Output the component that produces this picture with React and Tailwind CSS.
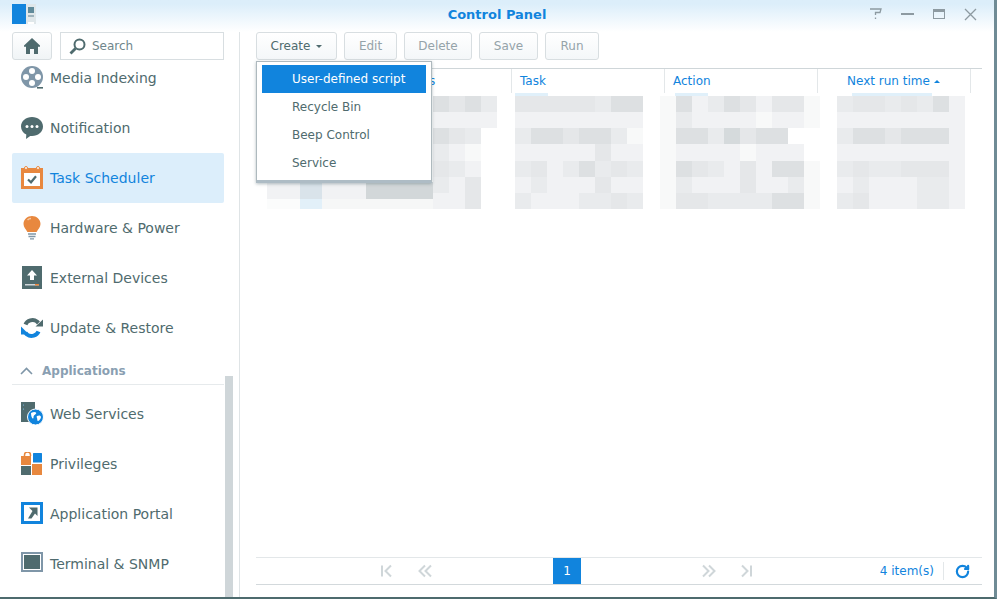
import { RotateCw } from 'lucide-react'

const shades = {
  X: 'bg-[#d5dadc]',
  D: 'bg-[#dde0e2]',
  M: 'bg-[#e5e7e9]',
  B: 'bg-[#e9ebed]',
  L: 'bg-[#f1f2f4]',
  W: 'bg-[#f8f9f9]',
  '.': 'bg-white',
}

// blurred table cells, one letter per 16px block
const statusCol = ['DMDB', 'LLLL', 'DMB.', 'BLW.', 'MBL.', 'BLM.', 'LLM.']
const taskCol = ['MMMMMBDD', 'LLLLLLLL', 'BDDMDDBW', 'LLLLLMLL', 'BMLBDBMB', 'LBLLLMLL', 'BLLLBBMB']
const actionCol = ['WDLBDMLMMW', 'WBLLLLWLLW', 'WDDBXMDD..', 'WLLLLWLLL.', 'WDMBLMLDDW', 'WBLLLMLLBW', 'WMMBBBBDDW']
const timeCol = ['BMMBMBDL', 'LLLLLLLL', 'BDDMDDDL', 'LLLLLLLL', 'BMBBMMML', 'LBLLLBBL', 'BMLLLBBL']

function Mosaic({ rows }) {
  return (
    <div className="flex flex-col h-[113px]">
      {rows.map((row, i) => (
        <div key={i} className="flex flex-1">
          {row.split('').map((c, j) => (
            <div key={j} className={`w-[16px] ${shades[c]}`} />
          ))}
        </div>
      ))}
    </div>
  )
}

function MediaIcon() {
  return (
    <svg width="24" height="24" viewBox="0 0 24 24">
      <circle cx="11" cy="11" r="11" fill="#7f96a8" />
      <circle cx="11" cy="5" r="3" fill="#fff" />
      <circle cx="11" cy="17" r="3" fill="#fff" />
      <circle cx="5" cy="11" r="3" fill="#fff" />
      <circle cx="17" cy="11" r="3" fill="#fff" />
      <path d="M16 21h6v1.6h-6z" fill="#4f6b6e" />
    </svg>
  )
}

function BubbleIcon() {
  return (
    <svg width="24" height="24" viewBox="0 0 24 24">
      <path d="M11 1c6 0 11 4 11 9.500S17 20 11 20c-.6 0-1.200 0-1.800-.1L5 23l.3-4.400C2.100 17 0 14 0 10.500 0 5 5 1 11 1z" fill="#4f6b6e" />
      <circle cx="6" cy="10.500" r="1.500" fill="#fff" />
      <circle cx="11" cy="10.500" r="1.500" fill="#fff" />
      <circle cx="16" cy="10.500" r="1.500" fill="#fff" />
    </svg>
  )
}

function TaskIcon() {
  return (
    <svg width="24" height="24" viewBox="0 0 24 24">
      <rect x="0" y="2" width="22" height="21" fill="#e8883f" />
      <rect x="3" y="7" width="16" height="13" fill="#fff" />
      <circle cx="5" cy="2" r="1.500" fill="#fff" stroke="#e8883f" />
      <circle cx="17" cy="2" r="1.500" fill="#fff" stroke="#e8883f" />
      <path d="M7 13.500l3 2.800 5-6" fill="none" stroke="#4f6b6e" strokeWidth="2.200" />
    </svg>
  )
}

function BulbIcon() {
  return (
    <svg width="24" height="24" viewBox="0 0 24 24">
      <path d="M11 0c4.500 0 8.500 3.400 8.500 8 0 3.400-2.500 5.300-3.900 8H6.400C5 13.300 2.500 11.400 2.500 8 2.500 3.400 6.500 0 11 0z" fill="#e8883f" />
      <path d="M6.500 4c1-1 2.200-1.500 3.500-1.500" stroke="#f6c8a0" strokeWidth="1.500" fill="none" />
      <path d="M7 18h8M7.500 20.500h7M9 22.800h4" stroke="#7f96a8" strokeWidth="1.300" />
    </svg>
  )
}

function ExternalIcon() {
  return (
    <svg width="24" height="24" viewBox="0 0 24 24">
      <rect x="1" y="0" width="20" height="23" fill="#4f6b6e" />
      <path d="M11 4l5 5.500h-3V14H9V9.500H6z" fill="#fff" />
      <rect x="4" y="18" width="14" height="1.500" fill="#cfd6d9" />
      <rect x="14" y="18" width="4" height="1.500" fill="#e8883f" />
    </svg>
  )
}

function UpdateIcon() {
  return (
    <svg width="24" height="24" viewBox="0 0 24 24">
      <path d="M4.500 8.500C6 4.500 12 2.500 16 5.500l1.500 1.500" fill="none" stroke="#4f6b6e" strokeWidth="4" />
      <path d="M15 9.500h7.500V2.500z" fill="#4f6b6e" transform="translate(-.5 1)" />
      <path d="M17.500 15.500C16 19.500 10 21.500 6 18.500L4.500 17" fill="none" stroke="#1184dd" strokeWidth="4" />
      <path d="M0 10.500v8h8z" fill="#1184dd" />
    </svg>
  )
}

function WebIcon() {
  return (
    <svg width="24" height="24" viewBox="0 0 24 24">
      <rect x="0" y="0" width="14" height="20" fill="#4f6b6e" />
      <circle cx="2.500" cy="3" r=".6" fill="#7fc0ee" />
      <circle cx="2.500" cy="7" r=".6" fill="#7fc0ee" />
      <circle cx="14.500" cy="15" r="8" fill="#1184dd" stroke="#fff" />
      <path d="M10 11c2-1 4-1.500 5-.5s-1 2-2 3 0 3-1 3-2-2-2-5.500zM16 14c2-1 4-.5 4 1s-2 4-3 4-.5-2-1-3-.5-1.500 0-2z" fill="#fff" />
    </svg>
  )
}

function PrivilegesIcon() {
  return (
    <svg width="24" height="24" viewBox="0 0 24 24">
      <path d="M3.500 4V3a3 3 0 0 1 6 0v1" fill="none" stroke="#e8883f" strokeWidth="1.500" />
      <rect x="0" y="4" width="10" height="9" fill="#e8883f" />
      <rect x="12" y="1" width="9" height="9.500" rx=".5" fill="#1184dd" />
      <rect x="0" y="14" width="10" height="9" fill="#4f6b6e" />
      <rect x="11" y="12" width="10" height="11" fill="#e8883f" />
    </svg>
  )
}

function PortalIcon() {
  return (
    <svg width="24" height="24" viewBox="0 0 24 24">
      <rect x="1.500" y="1.500" width="19" height="19" fill="#fff" stroke="#1184dd" strokeWidth="3" />
      <path d="M8 5.500h8.500V14l-2.500-2.500-3.500 5H7l4.500-7.500z" fill="#4f6b6e" />
    </svg>
  )
}

function TerminalIcon() {
  return (
    <svg width="24" height="24" viewBox="0 0 24 24">
      <rect x="0" y="0" width="22" height="20" fill="#7f96a8" />
      <rect x="2" y="2" width="18" height="16" fill="#fff" />
      <rect x="3" y="3" width="16" height="14" fill="#4f6b6e" />
    </svg>
  )
}

function HomeIcon() {
  return (
    <svg width="16" height="16" viewBox="0 0 16 16">
      <path d="M8 0L16 7.500v1.200H14V16H10V11H6V16H2V8.700H0V7.500z" fill="#4f6b6e" />
    </svg>
  )
}

function SearchIcon() {
  return (
    <svg width="17" height="17" viewBox="0 0 17 17">
      <circle cx="10.500" cy="6.500" r="5" fill="none" stroke="#4f6b6e" strokeWidth="2" />
      <path d="M6.500 10.500L1.500 15.500" stroke="#4f6b6e" strokeWidth="2.800" />
    </svg>
  )
}

function PagerIcon({ d }) {
  return (
    <svg width="14" height="14" viewBox="0 0 14 14" fill="none" stroke="#cfd6d9" strokeWidth="2">
      <path d={d} />
    </svg>
  )
}

function Item({ icon, label, active }) {
  return (
    <div className={`h-[50px] mx-[12px] w-[212px] rounded-[2px] flex items-center pl-[9px] gap-[5px] ${active ? 'bg-[#dceefb] text-[#1184dd]' : 'text-[#4f6b6e]'}`}>
      <div className="w-[24px] h-[24px] shrink-0 flex items-center">{icon}</div>
      <span className="pt-[1px]">{label}</span>
    </div>
  )
}

function ToolButton({ label, width, on, caret }) {
  return (
    <div className={`${width} h-[28px] border border-[#d8dee1] rounded-[3px] bg-gradient-to-b from-white to-[#f4f7f9] flex items-center justify-center gap-[6px] text-[12px] ${on ? 'text-[#4f6b6e]' : 'text-[#95a3a9]'}`}>
      {label}
      {caret && <div className="w-0 h-0 border-x-[3px] border-x-transparent border-t-[3px] border-t-[#4f6b6e]" />}
    </div>
  )
}

export default function App() {
  return (
    <div className="w-[997px] h-[599px] overflow-hidden bg-white flex flex-col font-['DejaVu_Sans',sans-serif] text-[14px]">
      <div className="flex flex-1 min-h-0 border-r-[3px] border-r-[#6f8b95] border-b-2 border-b-[#4d6b6e] bg-gradient-to-b from-[#dceefa] from-[4px] to-white to-[32px] bg-[length:100%_32px] bg-no-repeat flex-col">
        {/* title bar */}
        <div className="h-[32px] shrink-0 flex items-center relative">
          <div className="ml-[12px] mb-[5px] flex h-[20px]">
            <div className="w-[14px] bg-[#1184dd]" />
            <div className="w-[10px] bg-[#dfe7ea] flex flex-col items-center pt-[3px] gap-[2px]">
              <div className="w-[6px] h-[6px] bg-[#5f8a9a]" />
              <div className="w-[6px] h-[2px] bg-[#9fb4bd]" />
              <div className="w-[6px] h-[2px] mt-[3px] bg-[#fff]" />
            </div>
          </div>
          <div className="absolute left-0 right-0 top-[7px] text-center font-bold text-[#1184dd] text-[13px] leading-[16px]">Control Panel</div>
          <div className="absolute right-[17px] top-[7px] flex items-center gap-[19px]">
            <svg width="12" height="14" viewBox="0 0 12 14" fill="none" stroke="#8d9aa1" strokeWidth="1.300">
              <path d="M0 2h11l-1 3.500H5.500V8M5.500 10.500v1.500" />
            </svg>
            <div className="w-[13px] h-[2px] bg-[#8d9aa1]" />
            <div className="w-[12px] h-[10px] border border-[#8d9aa1] border-t-[3px]" />
            <svg width="13" height="13" viewBox="0 0 13 13" stroke="#8d9aa1" strokeWidth="1.300">
              <path d="M1 1l11 11M12 1L1 12" />
            </svg>
          </div>
        </div>

        <div className="flex flex-1 min-h-0">
          {/* sidebar */}
          <div className="w-[240px] shrink-0 border-r border-r-[#dfe4e6] relative overflow-hidden">
            <div className="relative z-10 mx-[12px] flex gap-[8px] h-[28px]">
              <div className="w-[40px] h-[28px] border border-[#d8dee1] rounded-[3px] bg-gradient-to-b from-white to-[#f0f4f6] flex items-center justify-center">
                <HomeIcon />
              </div>
              <div className="w-[164px] h-[28px] border border-[#d8dee1] bg-white flex items-center pl-[8px] gap-[6px] text-[12px] text-[#6f868b]">
                <SearchIcon />
                Search
              </div>
            </div>
            <div className="-mt-[7px]">
              <Item icon={<MediaIcon />} label="Media Indexing" />
              <Item icon={<BubbleIcon />} label="Notification" />
              <Item icon={<TaskIcon />} label="Task Scheduler" active />
              <Item icon={<BulbIcon />} label="Hardware &amp; Power" />
              <Item icon={<ExternalIcon />} label="External Devices" />
              <Item icon={<UpdateIcon />} label="Update &amp; Restore" />
              <div className="mx-[12px] w-[212px] h-[32px] border-b border-b-[#e6eaec] flex items-center gap-[9px] pl-[8px] pt-[4px] text-[12px] font-bold text-[#8a9fb2]">
                <svg width="13" height="8" viewBox="0 0 13 8" fill="none" stroke="#7f96a8" strokeWidth="1.600">
                  <path d="M1 7l5.500-5.500L12 7" />
                </svg>
                Applications
              </div>
              <div className="h-[4px]" />
              <Item icon={<WebIcon />} label="Web Services" />
              <Item icon={<PrivilegesIcon />} label="Privileges" />
              <Item icon={<PortalIcon />} label="Application Portal" />
              <Item icon={<TerminalIcon />} label="Terminal &amp; SNMP" />
            </div>
            <div className="absolute left-[225px] top-[344px] bottom-0 w-[8px] bg-[#cfd6d9]" />
          </div>

          {/* main */}
          <div className="flex-1 pl-[16px] pr-[12px] flex flex-col min-w-0">
            <div className="flex gap-[7px] h-[28px] shrink-0">
              <div className="relative">
                <ToolButton label="Create" width="w-[81px]" on caret />
                <div className="absolute z-10 left-0 top-[29px] w-[176px] h-[122px] bg-white border border-[#aeb9be] border-b-[3px] border-b-[#aebcc5] shadow-[0_1px_3px_rgba(90,110,120,0.45)] px-[5px] pt-[3px] text-[12px] text-[#4f6b6e]">
                  <div className="h-[28px] bg-[#1184dd] text-white flex items-center pl-[30px]">User-defined script</div>
                  <div className="h-[28px] flex items-center pl-[30px]">Recycle Bin</div>
                  <div className="h-[28px] flex items-center pl-[30px]">Beep Control</div>
                  <div className="h-[28px] flex items-center pl-[30px]">Service</div>
                </div>
              </div>
              <ToolButton label="Edit" width="w-[53px]" />
              <ToolButton label="Delete" width="w-[68px]" />
              <ToolButton label="Save" width="w-[59px]" />
              <ToolButton label="Run" width="w-[54px]" />
            </div>

            {/* table */}
            <div className="mt-[8px] border-t border-t-[#cfd6d9] flex h-[25px] shrink-0 text-[12px] text-[#1184dd]">
              <div className="w-[255px] pl-[141px] flex items-center">Status</div>
              <div className="w-[153px] border-l border-l-[#e3e7e9] pl-[8px] flex items-center">Task</div>
              <div className="w-[153px] border-l border-l-[#e3e7e9] pl-[8px] flex items-center">Action</div>
              <div className="w-[153px] border-l border-l-[#e3e7e9] pl-[29px] flex items-center gap-[4px]">
                Next run time
                <div className="w-0 h-0 border-x-[3px] border-x-transparent border-b-[3px] border-b-[#1184dd]" />
              </div>
              <div className="w-[12px] border-l border-l-[#e3e7e9]" />
            </div>
            <div className="flex h-[3px] shrink-0">
              <div className="ml-[259px] w-[33px] bg-[#e0f0fa]" />
              <div className="ml-[127px] w-[33px] bg-[#e0f0fa]" />
              <div className="ml-[144px] w-[80px] bg-[#e0f0fa]" />
            </div>
            <div className="flex flex-1 items-start min-h-0">
              <div className="ml-[11px] w-[166px] mt-[86px] flex flex-col">
                <div className="flex h-[17px]">
                  <div className="w-[33px] bg-[#f1f2f4]" />
                  <div className="w-[22px] bg-[#d9e3ea]" />
                  <div className="w-[44px] bg-[#f1f2f4]" />
                  <div className="w-[67px] bg-[#d2d7d9]" />
                </div>
                <div className="flex h-[10px]">
                  <div className="w-[33px] bg-[#fbfcfc]" />
                  <div className="w-[22px] bg-[#e2f0f9]" />
                  <div className="w-[111px] bg-[#f6f7f7]" />
                </div>
              </div>
              <Mosaic rows={statusCol} />
              <div className="w-[18px]" />
              <Mosaic rows={taskCol} />
              <div className="w-[17px]" />
              <Mosaic rows={actionCol} />
              <div className="w-[17px]" />
              <Mosaic rows={timeCol} />
            </div>

            {/* footer */}
            <div className="h-[28px] shrink-0 mb-[12px] border-y border-t-[#e3e7e9] border-b-[#d3d9dc] flex items-center text-[12px] text-[#1184dd]">
              <div className="ml-[124px]"><PagerIcon d="M2 1.500v11M11 1.500L5.500 7l5.500 5.500" /></div>
              <div className="ml-[24px]"><PagerIcon d="M7 1.500L1.500 7 7 12.500M13 1.500L7.500 7l5.500 5.500" /></div>
              <div className="ml-[121px] w-[28px] h-[26px] bg-[#1184dd] text-white flex items-center justify-center">1</div>
              <div className="ml-[121px]"><PagerIcon d="M7 1.500L12.500 7 7 12.500M1 1.500L6.500 7 1 12.500" /></div>
              <div className="ml-[23px]"><PagerIcon d="M12 1.500v11M3 1.500L8.500 7 3 12.500" /></div>
              <div className="flex-1" />
              <span>4 item(s)</span>
              <div className="w-px h-[18px] bg-[#e3e7e9] ml-[9px] mr-[11px]" />
              <RotateCw size={15} strokeWidth={3.5} className="mr-[12px] text-[#1184dd]" />
            </div>
          </div>
        </div>
      </div>
    </div>
  )
}
